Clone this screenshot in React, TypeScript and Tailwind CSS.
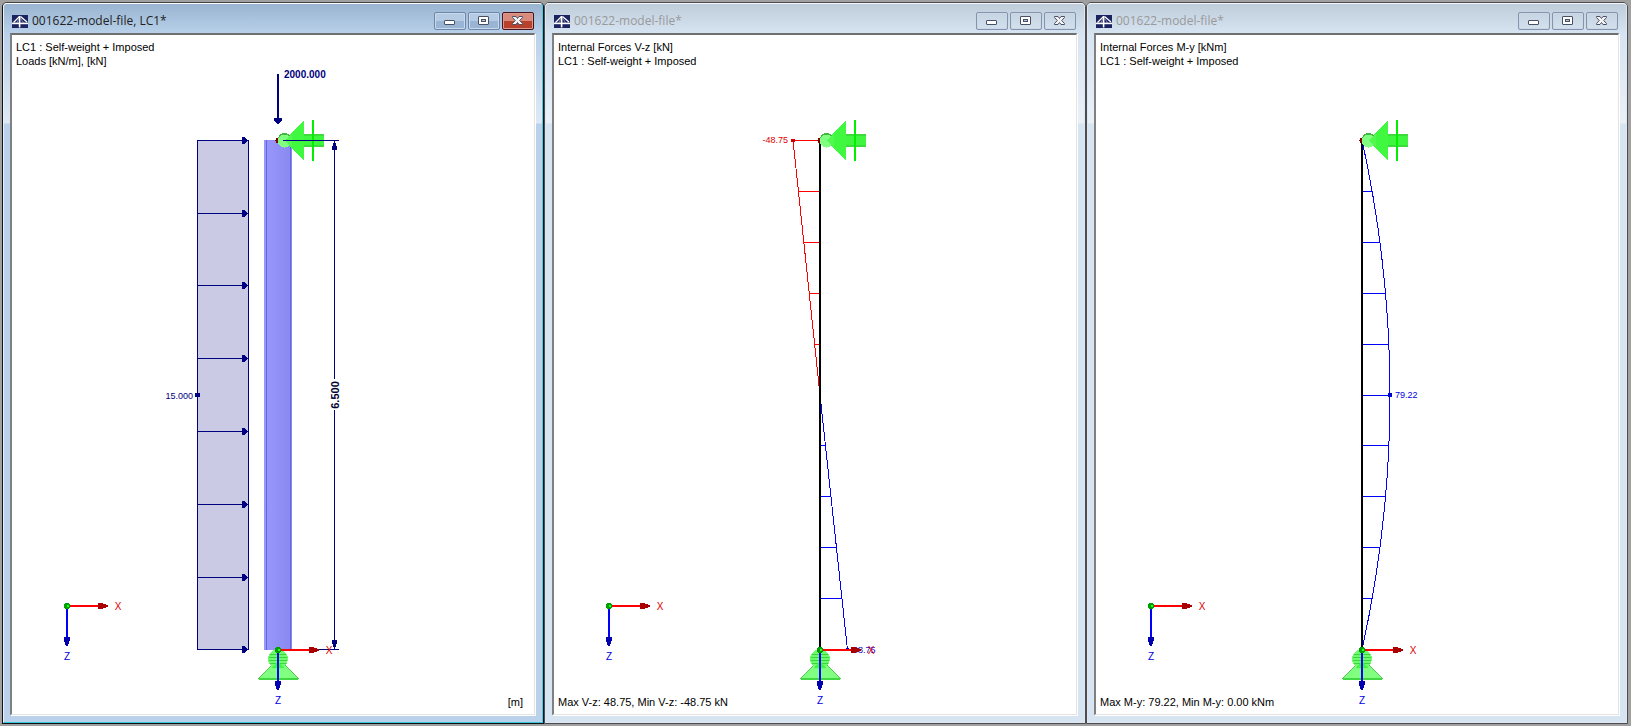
import type { ReactNode } from 'react';
import clsx from 'clsx';

const NAVY = '#000080';
const TOP = 105;
const BOTTOM = 615;
const MEMBER_X = 266;
const STATIONS = [0, 1, 2, 3, 4, 5, 6, 7, 8, 9, 10];

const stationY = (i: number) => TOP + 0.5 + Math.round(i * 50.9);

function BridgeIcon() {
  return (
    <svg width="16" height="13" viewBox="0 0 16 13" aria-hidden="true" className="shrink-0">
      <rect width="16" height="13" fill="#1b2360" />
      <path d="M7.5 1.5L1.5 7.5M8.5 1.5L15 7" stroke="#fff" strokeWidth="1.2" fill="none" />
      <path d="M8 2L11.5 8M7 3L5 8" stroke="#8f96c0" strokeWidth="0.8" fill="none" />
      <path d="M0 7.6H16V9.2H0Z" fill="#fff" />
      <path d="M6.8 1H8.4V12.5H6.8Z" fill="#fff" />
    </svg>
  );
}

function MinimizeGlyph() {
  return (
    <svg width="12" height="12" viewBox="0 0 12 12" aria-hidden="true">
      <rect x="0.5" y="5.5" width="10" height="4" rx="0.5" fill="#fff" stroke="#4a5064" />
    </svg>
  );
}

function RestoreGlyph() {
  return (
    <svg width="12" height="12" viewBox="0 0 12 12" aria-hidden="true">
      <rect x="0.5" y="1.5" width="10" height="8" rx="0.5" fill="#fff" stroke="#4a5064" />
      <rect x="3.5" y="4.5" width="4" height="2" fill="#b4c6dc" stroke="#4a5064" />
    </svg>
  );
}

function CloseGlyph() {
  return (
    <svg width="12" height="12" viewBox="0 0 12 12" aria-hidden="true">
      <path
        d="M0.5 1.5H4L5.5 3.5L7 1.5H10.5V2.5L7.7 5.5L10.5 8.5V9.5H7L5.5 7.5L4 9.5H0.5V8.5L3.3 5.5L0.5 2.5Z"
        fill="#f4f4f4"
        stroke="#4a5064"
      />
    </svg>
  );
}

function CaptionButton({ label, className, children }: { label: string; className: string; children: ReactNode }) {
  return (
    <button type="button" aria-label={label} className={clsx('flex h-[18px] w-8 items-center justify-center rounded-[2px] border', className)}>
      {children}
    </button>
  );
}

type WindowProps = {
  title: string;
  active?: boolean;
  header: string[];
  footer: string;
  footerRight?: boolean;
  children: ReactNode;
};

function ModelWindow({ title, active, header, footer, footerRight, children }: WindowProps) {
  const button = active
    ? 'border-[#6f86ab] bg-linear-to-b from-[#b5cbe3] from-50% to-[#9ab5d3] to-50% shadow-[inset_0_0_0_1px_#c9daec]'
    : 'border-[#8494b0] shadow-[inset_0_0_0_1px_#cbd8e6]';

  return (
    <section
      className={clsx(
        'flex min-w-0 flex-1 flex-col rounded-t-[5px] border',
        active ? 'border-[#111] border-t-[#444]' : 'border-[#4d4d50]'
      )}
    >
      <div
        className={clsx(
          'flex flex-1 flex-col rounded-t-[4px] border px-[6px] pb-[6px]',
          active
            ? 'border-t-white border-r-[#35d0ea] border-b-[#35c8e0] border-l-[#e8f2fa] bg-[linear-gradient(#99b4d1_0px,#b9d1ea_30px,#dfe9f5_119px,#b9d1ea_120px)]'
            : 'border-[#dfe8f2] border-t-[#f4f8fc] bg-[linear-gradient(#bfcddb_0px,#d7e4f2_30px,#e9f0f8_119px,#d7e4f2_120px)]'
        )}
      >
        <header className="flex h-[29px] items-center justify-between px-[2px] pt-[5px]">
          <div className="flex min-w-0 items-center gap-1">
            <BridgeIcon />
            <h2 className={clsx("truncate font-['Open_Sans',sans-serif] text-[12px] leading-4", active ? 'text-[#222]' : 'text-[#999]')}>
              {title}
            </h2>
          </div>
          <div className="flex shrink-0 gap-[2px]">
            <CaptionButton label="Minimize" className={button}>
              <MinimizeGlyph />
            </CaptionButton>
            <CaptionButton label="Restore" className={button}>
              <RestoreGlyph />
            </CaptionButton>
            <CaptionButton
              label="Close"
              className={
                active
                  ? 'border-[#431422] bg-linear-to-b from-[#d88a7c] from-50% to-[#b8412b] to-50% shadow-[inset_0_0_0_1px_#dd9a8c]'
                  : button
              }
            >
              <CloseGlyph />
            </CaptionButton>
          </div>
        </header>
        <div className="mr-px mb-px flex-1 border-t-2 border-r border-b border-l-2 border-t-[#6f6f6f] border-r-[#e3e3e3] border-b-[#e3e3e3] border-l-[#808080] shadow-[1px_1px_0_#fff]">
          <div className="grid h-full bg-white font-['Liberation_Sans',sans-serif] text-[11px] leading-[14px] text-black">
            <svg viewBox="0 0 522 679" className="h-full w-full [grid-area:1/1]" shapeRendering="crispEdges">
              {children}
            </svg>
            <div className="flex flex-col justify-between px-1 py-[5px] [grid-area:1/1]">
              <div>
                {header.map((line) => (
                  <p key={line}>{line}</p>
                ))}
              </div>
              <p className={clsx(footerRight && 'pr-[7px] text-right')}>{footer}</p>
            </div>
          </div>
        </div>
      </div>
    </section>
  );
}

function Axes({ x, y }: { x: number; y: number }) {
  return (
    <g transform={`translate(${x} ${y})`}>
      <path d="M0 0H32" stroke="#ff0000" strokeWidth="2" />
      <path d="M31 -3H34L41 -1V1L34 3H31Z" fill="#a80000" />
      <path d="M0 0V32" stroke="#0000ff" strokeWidth="2" />
      <path d="M-3 31H3V34L1 40H-1L-3 34Z" fill="#0000b0" />
      <circle r="3" fill="#00a000" />
      <circle cx="1" cy="0" r="1" fill="#20ff20" />
      <text x="51" y="4" textAnchor="middle" fontSize="10" fill="#e00000">X</text>
      <text x="0" y="54" textAnchor="middle" fontSize="10" fill="#0000e0">Z</text>
    </g>
  );
}

function RollerSupport() {
  return (
    <g transform={`translate(${MEMBER_X} ${TOP})`}>
      <circle r="2.5" cy="0.5" fill="#800000" />
      <rect x="26" y="-6" width="20" height="13" fill="#3bdc3b" />
      <rect x="26" y="-4" width="20" height="9" fill="#40f540" />
      <path d="M6 0.5L26 -19V20Z" fill="#40f840" />
      <circle cx="6.5" cy="0" r="7" fill="#40b840" />
      <circle cx="6.5" cy="1" r="6.5" fill="#80ff80" />
      <path d="M7 0.5L14 -6V7Z" fill="#50f850" />
      <rect x="34" y="-20" width="2" height="41" fill="#00f000" />
    </g>
  );
}

function PinnedSupport() {
  return (
    <g transform={`translate(${MEMBER_X} ${BOTTOM})`}>
      <path d="M-19 28L-6 15H7L20 28Z" fill="#80ff80" stroke="#50c850" />
      <rect x="-19" y="28" width="39" height="2" fill="#40d840" />
      <circle cx="0" cy="9" r="10" fill="#70fa70" />
      <path d="M-8 4.5H8M-9 7.5H9M-9 10.5H9M-8 13.5H8" stroke="#38d838" />
      <path d="M-7 18L0 12L7 18Z" fill="#40f840" />
    </g>
  );
}

function Member() {
  return <rect x={MEMBER_X - 1} y={TOP} width="2" height={BOTTOM - TOP} fill="#000" />;
}

function LoadDiagram() {
  const arrows = [105, 178, 250, 323, 396, 469, 542, 614];
  return (
    <>
      <defs>
        <linearGradient id="column">
          <stop offset="0" stopColor="#9898fc" />
          <stop offset="1" stopColor="#8888f0" />
        </linearGradient>
      </defs>
      <rect x="185.5" y="105.5" width="51" height="509" fill="#cacae4" stroke={NAVY} />
      {arrows.map((y) => (
        <g key={y}>
          <path d={`M185 ${y + 0.5}H236`} stroke={NAVY} />
          <path d={`M230 ${y - 3}H232L236 ${y}V${y + 1}L232 ${y + 4}H230Z`} fill={NAVY} />
        </g>
      ))}
      <rect x="183" y="358" width="5" height="4" fill={NAVY} />
      <text x="181" y="364" textAnchor="end" fontSize="9" fill={NAVY}>15.000</text>

      <rect x="252" y="105" width="28" height="510" fill="url(#column)" />
      <rect x="254" y="105" width="1" height="510" fill="#6464dc" />
      <rect x="278" y="105" width="1" height="510" fill="#6464dc" />

      <rect x="265" y="39" width="2" height="46" fill={NAVY} />
      <path d="M262 83H270V85L267 89H265L262 85Z" fill={NAVY} />
      <text x="272" y="43" fontSize="10" fontWeight="bold" fill={NAVY}>2000.000</text>

      <path d="M322.5 105V344M322.5 375V615" stroke={NAVY} />
      <path d="M320 115V112L322 107H323L325 112V115Z" fill={NAVY} />
      <path d="M320 605H325V608L323 613H322L320 608Z" fill={NAVY} />
      <text transform="translate(327 360) rotate(-90)" textAnchor="middle" fontSize="11" fontWeight="bold" fill="#000030">6.500</text>

      <RollerSupport />
      <path d="M271 105.5H327M266 614.5H327" stroke={NAVY} />
      <PinnedSupport />
    </>
  );
}

function ShearDiagram() {
  return (
    <>
      {STATIONS.map((i) => {
        const x = MEMBER_X - 27 + i * 5.4;
        return i === 5 || i === 10 ? null : (
          <path key={i} d={`M${MEMBER_X} ${stationY(i)}H${x}`} stroke={i < 5 ? '#ff0000' : '#0000ff'} />
        );
      })}
      <path d="M239 105L266 360" stroke="#ff0000" />
      <path d="M266 360L293.5 615" stroke="#0000ff" />
      <Member />
      <rect x="237" y="104" width="4" height="3" fill="#d00000" />
      <rect x="292" y="613" width="3" height="3" fill="#0000d0" />
      <text x="234" y="108" textAnchor="end" fontSize="9" fill="#e00000">-48.75</text>
      <text x="299" y="618" fontSize="9" fill="#0000e0">48.75</text>
      <RollerSupport />
      <PinnedSupport />
    </>
  );
}

function MomentDiagram() {
  const offset = (i: number) => 28 * (1 - ((i - 5) / 5) ** 2);
  return (
    <>
      {STATIONS.slice(1, 10).map((i) => (
        <path key={i} d={`M${MEMBER_X} ${stationY(i)}H${MEMBER_X + offset(i)}`} stroke="#0000ff" />
      ))}
      <path d={`M${MEMBER_X} ${TOP}Q${MEMBER_X + 56} 360 ${MEMBER_X} ${BOTTOM}`} fill="none" stroke="#0000ff" />
      <Member />
      <rect x="292" y="358" width="4" height="4" fill="#0000d0" />
      <text x="299" y="363" fontSize="9" fill="#0000e0">79.22</text>
      <RollerSupport />
      <PinnedSupport />
    </>
  );
}

export default function App() {
  return (
    <main className="flex min-h-screen bg-[#a0a0a0] pt-[2px] pr-[3px] pb-[2px] pl-[2px]">
      <ModelWindow
        title="001622-model-file, LC1*"
        active
        header={['LC1 : Self-weight + Imposed', 'Loads [kN/m], [kN]']}
        footer="[m]"
        footerRight
      >
        <LoadDiagram />
        <Axes x={MEMBER_X} y={BOTTOM} />
        <Axes x={55} y={571} />
      </ModelWindow>
      <ModelWindow
        title="001622-model-file*"
        header={['Internal Forces V-z [kN]', 'LC1 : Self-weight + Imposed']}
        footer="Max V-z: 48.75, Min V-z: -48.75 kN"
      >
        <ShearDiagram />
        <Axes x={MEMBER_X} y={BOTTOM} />
        <Axes x={55} y={571} />
      </ModelWindow>
      <ModelWindow
        title="001622-model-file*"
        header={['Internal Forces M-y [kNm]', 'LC1 : Self-weight + Imposed']}
        footer="Max M-y: 79.22, Min M-y: 0.00 kNm"
      >
        <MomentDiagram />
        <Axes x={MEMBER_X} y={BOTTOM} />
        <Axes x={55} y={571} />
      </ModelWindow>
    </main>
  );
}
